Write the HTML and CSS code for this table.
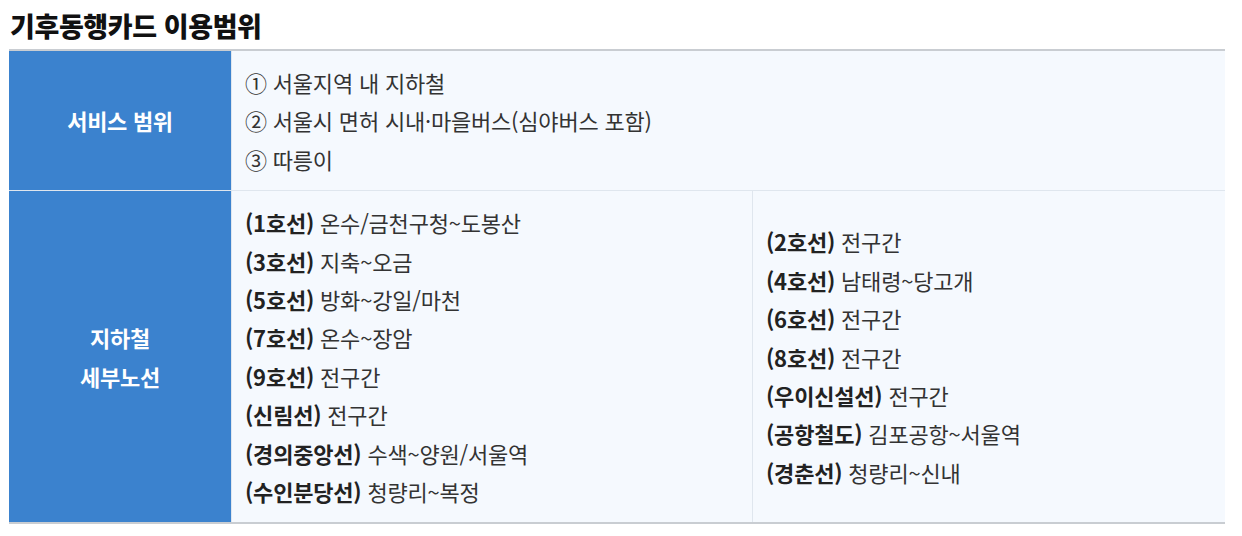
FILE: index.html
```html
<!DOCTYPE html>
<html lang="ko">
<head>
    <meta charset="UTF-8">
    <meta name="viewport" content="width=device-width, initial-scale=1.0">
    <title>기후동행카드 이용범위</title>
    <link rel="stylesheet" href="styles.css">
</head>
<body>

    <div class="container">
        <h1 class="title">기후동행카드 이용범위</h1>

        <div class="range-table">
            <!-- 서비스 범위 -->
            <div class="head-cell">서비스 범위</div>
            <div class="cell span-2">
                <p>① 서울지역 내 지하철</p>
                <p>② 서울시 면허 시내·마을버스(심야버스 포함)</p>
                <p>③ 따릉이</p>
            </div>

            <!-- 지하철 세부노선 -->
            <div class="head-cell last">지하철<br>세부노선</div>
            <div class="cell last">
                <p><strong>(1호선)</strong> 온수/금천구청~도봉산</p>
                <p><strong>(3호선)</strong> 지축~오금</p>
                <p><strong>(5호선)</strong> 방화~강일/마천</p>
                <p><strong>(7호선)</strong> 온수~장암</p>
                <p><strong>(9호선)</strong> 전구간</p>
                <p><strong>(신림선)</strong> 전구간</p>
                <p><strong>(경의중앙선)</strong> 수색~양원/서울역</p>
                <p><strong>(수인분당선)</strong> 청량리~복정</p>
            </div>
            <div class="cell last divided">
                <p><strong>(2호선)</strong> 전구간</p>
                <p><strong>(4호선)</strong> 남태령~당고개</p>
                <p><strong>(6호선)</strong> 전구간</p>
                <p><strong>(8호선)</strong> 전구간</p>
                <p><strong>(우이신설선)</strong> 전구간</p>
                <p><strong>(공항철도)</strong> 김포공항~서울역</p>
                <p><strong>(경춘선)</strong> 청량리~신내</p>
            </div>
        </div>
    </div>

</body>
</html>
```

FILE: styles.css
```css
/* General Styles */
body {
    font-family: "Noto Sans CJK KR", "Noto Sans", sans-serif;
    margin: 0;
    padding: 0;
    background-color: #fff;
    color: #333;
}

.container {
    padding: 8px 17px 0 9px;
}

.title {
    margin: 0 0 5px 1px;
    font-size: 27px;
    line-height: 36px;
    font-weight: 900;
    letter-spacing: -0.4px;
    color: #111;
}

/* Table */
.range-table {
    display: grid;
    grid-template-columns: 223px 520px 1fr;
    border-top: 2px solid #c9cdd2;
    border-bottom: 2px solid #c9cdd2;
}

.head-cell {
    display: flex;
    align-items: center;
    justify-content: center;
    text-align: center;
    background-color: #3b82ce;
    color: #fff;
    font-size: 22px;
    font-weight: 700;
    line-height: 39px;
    letter-spacing: -0.3px;
    border-right: 1px solid #dfe6ee;
    border-bottom: 1px solid #dfe6ee;
}

.cell {
    display: flex;
    flex-direction: column;
    justify-content: center;
    background-color: #f5f9fe;
    padding: 12px 14px 12px 13px;
    font-size: 22px;
    line-height: 38.4px;
    letter-spacing: -0.2px;
    border-bottom: 1px solid #dfe6ee;
}

.cell p {
    margin: 0;
}

.cell strong {
    font-weight: 700;
    color: #222;
}

.span-2 {
    grid-column: span 2;
}

.divided {
    border-left: 1px solid #dfe6ee;
}

.last {
    border-bottom: none;
}
```
